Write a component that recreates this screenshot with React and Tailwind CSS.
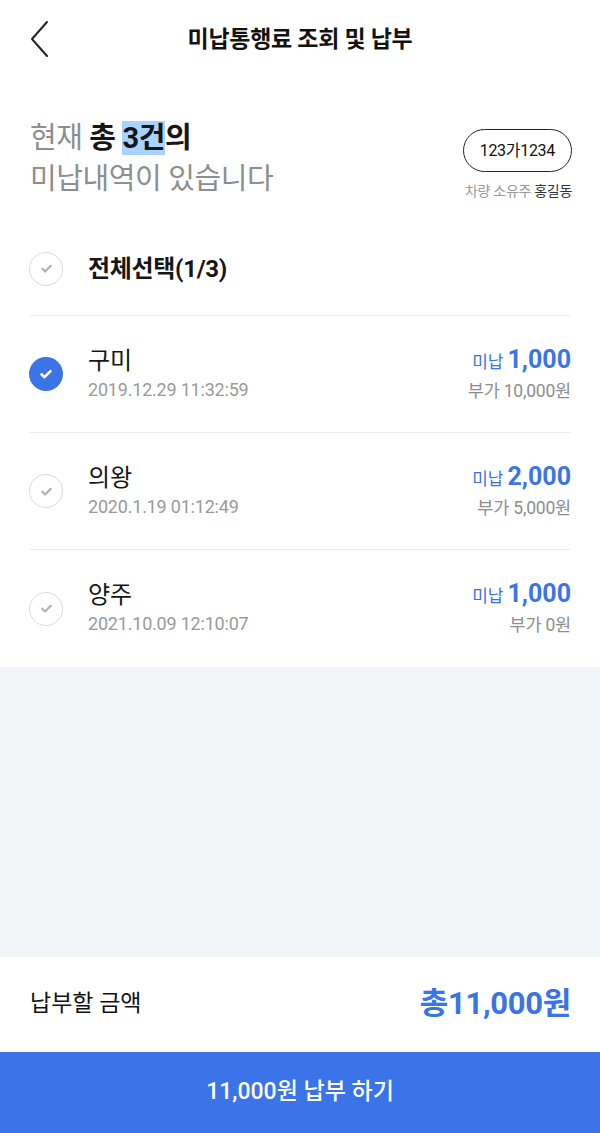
import React from "react";

function Check({ checked }) {
  if (checked) {
    return (
      <div className="w-[34px] h-[34px] rounded-full bg-[#3a74e6] flex items-center justify-center shrink-0">
        <svg width="16" height="16" viewBox="0 0 16 16" fill="none">
          <path d="M3.5 8.3l3 2.9 6-6" stroke="#fff" strokeWidth="2.6" strokeLinecap="round" strokeLinejoin="round" />
        </svg>
      </div>
    );
  }
  return (
    <div className="w-[34px] h-[34px] rounded-full border-[1.5px] border-[#dcdcdc] flex items-center justify-center shrink-0">
      <svg width="15" height="15" viewBox="0 0 16 16" fill="none">
        <path d="M3.5 8.3l3 2.9 6-6" stroke="#b3b3b3" strokeWidth="2.4" strokeLinecap="round" strokeLinejoin="round" />
      </svg>
    </div>
  );
}

const items = [
  { name: "구미", date: "2019.12.29 11:32:59", amt: "1,000", extra: "부가 10,000원", checked: true },
  { name: "의왕", date: "2020.1.19 01:12:49", amt: "2,000", extra: "부가 5,000원", checked: false },
  { name: "양주", date: "2021.10.09 12:10:07", amt: "1,000", extra: "부가 0원", checked: false },
];

export default function App() {
  return (
    <div
      className="w-[600px] h-[1133px] flex flex-col bg-white text-[#111]"
      style={{ fontFamily: 'Roboto, "Noto Sans CJK KR", "Noto Sans", sans-serif' }}
    >
      <header className="relative h-[80px] shrink-0 flex items-center justify-center">
        <div className="absolute left-[28px] top-[20px]">
          <svg width="24" height="38" viewBox="0 0 24 38" fill="none">
            <path d="M19 2L4 19l15 17" stroke="#222" strokeWidth="2" strokeLinecap="round" strokeLinejoin="round" />
          </svg>
        </div>
        <h1 className="text-[23px] font-bold tracking-[-0.3px]">미납통행료 조회 및 납부</h1>
      </header>

      <section className="flex justify-between items-start mt-[38px] pl-[30px] pr-[28px]">
        <div className="text-[29px] leading-[41px] text-[#8e8e8e] tracking-[-0.4px]">
          <div>
            현재 <span className="font-bold text-[#161616]">총 <span className="bg-[#a9d3ff]">3건</span>의</span>
          </div>
          <div>미납내역이 있습니다</div>
        </div>
        <div className="flex flex-col items-end mt-[11px]">
          <div className="h-[43px] px-[16px] rounded-full border-[1.5px] border-[#222] flex items-center text-[16px] text-[#111] tracking-[-0.3px]">
            123가1234
          </div>
          <div className="mt-[10px] text-[14px] leading-[18px] text-[#999] tracking-[-0.3px]">
            차량 소유주 <span className="text-[#333]">홍길동</span>
          </div>
        </div>
      </section>

      <div className="mt-[22px] mx-[29px] h-[94px] flex items-center border-b border-[#ececec]">
        <Check checked={false} />
        <span className="ml-[25px] text-[24px] font-bold text-[#161616] tracking-[-0.3px]">전체선택(1/3)</span>
      </div>

      <div className="mx-[29px]">
        {items.map((it, i) => (
          <div
            key={i}
            className={`h-[117px] flex items-center ${i < items.length - 1 ? "border-b border-[#ececec]" : ""}`}
          >
            <Check checked={it.checked} />
            <div className="ml-[25px] flex-1 flex flex-col">
              <span className="text-[24px] leading-[30px] text-[#161616]">{it.name}</span>
              <span className="text-[18px] leading-[26px] mt-[1px] text-[#9a9a9a] tracking-[-0.2px]">{it.date}</span>
            </div>
            <div className="flex flex-col items-end">
              <div className="flex items-baseline leading-[30px] text-[#3a74e6]">
                <span className="text-[17px] mr-[4px]">미납</span>
                <span className="text-[25px] font-bold">{it.amt}</span>
              </div>
              <span className="text-[17.5px] leading-[26px] mt-[1px] text-[#8e8e8e] tracking-[-0.2px]">{it.extra}</span>
            </div>
          </div>
        ))}
      </div>

      <div className="flex-1 bg-[#f4f5f9]" />

      <div className="h-[95px] shrink-0 bg-white flex items-center justify-between pl-[30px] pr-[29px]">
        <span className="text-[23px] text-[#111]">납부할 금액</span>
        <span className="text-[31px] font-bold text-[#3a74e6] tracking-[-0.3px]">총11,000원</span>
      </div>
      <button className="h-[81px] shrink-0 bg-[#3a74e8] text-white text-[23px] font-medium flex items-center justify-center">
        11,000원 납부 하기
      </button>
    </div>
  );
}
